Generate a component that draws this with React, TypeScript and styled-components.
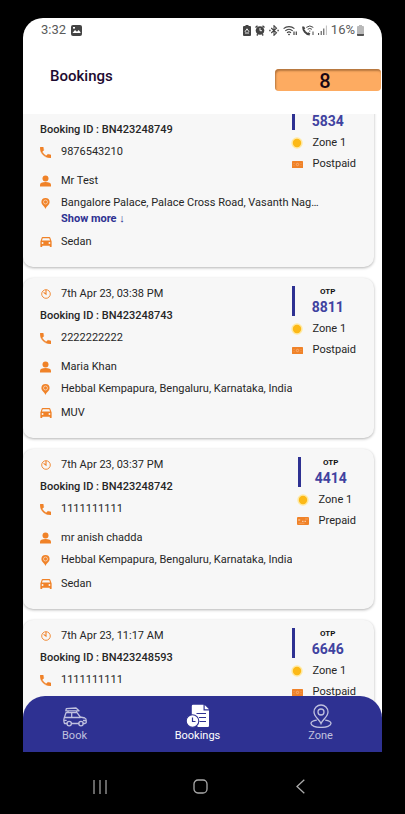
import React, { useLayoutEffect, useRef } from "react";
import styled, { createGlobalStyle } from "styled-components";

const GlobalStyle = createGlobalStyle`
  * { box-sizing: border-box; }
  body { margin: 0; background: #000; }
  button { font: inherit; border: 0; padding: 0; background: none; cursor: pointer; }
`;

const ORANGE = "#f08228";
const INDIGO = "#2e3192";

const Device = styled.div`
  display: flex;
  flex-direction: column;
  height: 100vh;
  padding: 18px 23px 0;
  background: #000;
  font-family: Roboto, "Liberation Sans", sans-serif;
  color: #262626;
`;

const Screen = styled.div`
  flex: 1;
  min-height: 0;
  display: flex;
  flex-direction: column;
  overflow: hidden;
  background: #fff;
  border-radius: 20px 20px 0 0;
`;

const StatusBar = styled.div`
  display: flex;
  align-items: center;
  justify-content: space-between;
  height: 24px;
  padding: 0 18px;
  font-size: 13px;
  line-height: 24px;
  color: #5a5a5a;
`;

const StatusGroup = styled.div<{ $gap: number }>`
  display: flex;
  align-items: center;
  gap: ${(p) => p.$gap}px;
`;

const Header = styled.header`
  display: flex;
  align-items: center;
  justify-content: space-between;
  padding: 23px 1px 19px 27px;
`;

const Title = styled.h1`
  margin: 0;
  padding-bottom: 8px;
  font-size: 15px;
  font-weight: 500;
  line-height: 22px;
  color: #1d0a30;
`;

const CountBadge = styled.div`
  width: 106px;
  height: 22px;
  padding-right: 6px;
  border-radius: 4px;
  background: #fdab61;
  box-shadow: inset 1px 2px 2px #b5763f;
  text-align: center;
  font-size: 20px;
  font-weight: 500;
  line-height: 24px;
  color: #1a0714;
`;

const BookingList = styled.main`
  flex: 1;
  min-height: 0;
  overflow-y: auto;
  scrollbar-width: none;
  display: flex;
  flex-direction: column;
  gap: 11px;
  padding: 0 8px 28px 0;
`;

const Card = styled.article`
  flex: none;
  padding: 8px 18px 17px 17px;
  border-radius: 10px;
  background: #f7f7f7;
  box-shadow: 0 1px 3px rgba(0, 0, 0, 0.3);
  font-size: 11px;
  line-height: 16px;
`;

const CardTop = styled.div`
  display: flex;
  justify-content: space-between;
  padding-bottom: 1px;
`;

const Details = styled.div`
  display: flex;
  flex-direction: column;
  gap: 6px;
`;

const Lower = styled.div`
  display: flex;
  flex-direction: column;
  gap: 8px;
`;

const Row = styled.div`
  display: flex;
  gap: 10px;
  min-width: 0;
`;

const IconSlot = styled.span`
  flex: none;
  display: flex;
  align-items: center;
  justify-content: center;
  width: 11px;
  height: 16px;
  svg { flex: none; }
`;

const BookingId = styled.div`
  font-weight: 500;
`;

const Address = styled.div`
  min-width: 0;
  max-width: 260px;
`;

const AddressText = styled.div`
  overflow: hidden;
  white-space: nowrap;
  text-overflow: ellipsis;
`;

const ShowMore = styled.button`
  display: block;
  font-weight: 700;
  line-height: 15px;
  color: ${INDIGO};
`;

const Side = styled.div`
  display: flex;
  flex-direction: column;
  gap: 5px;
`;

const Otp = styled.div`
  height: 30px;
  padding-left: 5px;
  border-left: 3px solid ${INDIGO};
  text-align: center;
`;

const OtpLabel = styled.div`
  font-size: 8px;
  font-weight: 700;
  line-height: 12px;
  color: #111;
`;

const OtpCode = styled.div`
  font-size: 14px;
  font-weight: 700;
  line-height: 18px;
  color: #3f42a0;
`;

const TabBar = styled.nav`
  position: relative;
  flex: none;
  margin-top: -22px;
  border-radius: 22px 22px 0 0;
  background: ${INDIGO};
`;

const Tabs = styled.div`
  display: grid;
  grid-template-columns: repeat(3, 1fr);
  height: 56px;
  margin-left: -10px;
`;

const Tab = styled.a<{ $active?: boolean }>`
  display: flex;
  flex-direction: column;
  align-items: center;
  padding-top: 8px;
  font-size: 11px;
  line-height: 16px;
  text-decoration: none;
  color: ${(p) => (p.$active ? "#fff" : "#c0c1df")};
  svg { height: 24px; }
`;

const SystemBar = styled.div`
  display: grid;
  grid-template-columns: repeat(3, 1fr);
  height: 62px;
  padding: 7px 31px 0 27px;
`;

const SystemButton = styled.button`
  display: flex;
  align-items: center;
  justify-content: center;
`;

const ClockIcon = () => (
  <svg width="10" height="10" viewBox="0 0 10 10" fill="none" stroke={ORANGE}>
    <circle cx="5" cy="5" r="4.300" strokeWidth=".9" />
    <path d="M5 .8v4.400L2.600 3.400" strokeWidth="1.100" />
  </svg>
);
const PhoneIcon = () => (
  <svg width="11" height="11" viewBox="3 3 18 18" fill={ORANGE} stroke={ORANGE} strokeWidth=".6">
    <path d="M6.600 10.800c1.400 2.800 3.800 5.100 6.600 6.600l2.200-2.200c.3-.3.7-.4 1-.2 1.100.4 2.300.6 3.600.6.6 0 1 .4 1 1V20c0 .6-.4 1-1 1C10.600 21 3 13.400 3 4c0-.6.5-1 1-1h3.500c.6 0 1 .4 1 1 0 1.300.2 2.500.6 3.600.1.300 0 .7-.2 1z" />
  </svg>
);
const PersonIcon = () => (
  <svg width="11" height="12" viewBox="0 0 11 12" fill={ORANGE}>
    <circle cx="5.500" cy="3.400" r="3" />
    <path d="M0 11.500V10c0-2 2.200-2.900 5.500-2.900S11 8 11 10v1.500z" />
  </svg>
);
const PinIcon = () => (
  <svg width="9" height="11" viewBox="0 0 9 11">
    <path d="M4.500 0A4.100 4.100 0 0 0 .4 4C.4 6.800 3.600 8.200 4.500 11 5.400 8.200 8.600 6.800 8.600 4A4.100 4.100 0 0 0 4.500 0z" fill={ORANGE} />
    <circle cx="4.500" cy="4" r="2" fill="none" stroke="#fbe3cf" strokeWidth=".7" />
  </svg>
);
const CarIcon = () => (
  <svg width="12" height="10" viewBox="2.500 5 19 16" fill={ORANGE}>
    <path
      fillRule="evenodd"
      d="M18.900 6c-.2-.6-.8-1-1.400-1h-11c-.7 0-1.200.4-1.400 1L3 12v8c0 .6.4 1 1 1h1c.6 0 1-.4 1-1v-1h12v1c0 .6.4 1 1 1h1c.6 0 1-.4 1-1v-8zM6.500 16a1.500 1.500 0 1 1 0-3 1.500 1.500 0 0 1 0 3zm11 0a1.500 1.500 0 1 1 0-3 1.500 1.500 0 0 1 0 3zM5.500 10.500l1.300-3.500h10.400l1.300 3.500z"
    />
  </svg>
);
const ZoneDot = () => (
  <svg width="12" height="12" viewBox="0 0 12 12">
    <circle cx="6" cy="6" r="5.700" fill="#ffe9a3" />
    <circle cx="6" cy="6" r="4.200" fill="#fcb917" />
  </svg>
);
const CashIcon = () => (
  <svg width="11" height="7" viewBox="0 0 11 7">
    <rect width="11" height="7" rx=".6" fill={ORANGE} />
    <circle cx="5.500" cy="3.500" r="1.200" fill="none" stroke="#fac59b" strokeWidth=".6" />
    <path d="M2 2v.8M9 2v.8M2 4.300v.8M9 4.300v.8" stroke="#f8b784" strokeWidth=".6" />
  </svg>
);
const CreditIcon = () => (
  <svg width="12" height="8" viewBox="0 0 12 8">
    <rect width="12" height="8" rx="1" fill={ORANGE} />
    <path d="M1.200 3h2M5 4.300h1.500M7.500 4.300H9" stroke="#fff" strokeWidth=".7" />
    <path d="M1.500 6.300h6M8 2h3" stroke="#f9bd8c" strokeWidth=".5" />
  </svg>
);

const PhotoIcon = () => (
  <svg width="11" height="11" viewBox="0 0 11 11">
    <rect width="11" height="11" rx="2" fill="#444" />
    <path d="M1.500 8 4 5l2 1.800L7.700 5 9.500 7.200V8z" fill="#fff" />
    <rect x="2" y="2" width="2" height="1.600" fill="#fff" />
  </svg>
);
const BatterySaverIcon = () => (
  <svg width="8" height="11" viewBox="0 0 8 11">
    <path d="M2.500 0h3v1H7a1 1 0 0 1 1 1v8a1 1 0 0 1-1 1H1a1 1 0 0 1-1-1V2a1 1 0 0 1 1-1h1.500z" fill="#444" />
    <path d="M2 6.800 4 3.800l2 3M2 8h4" fill="none" stroke="#fff" strokeWidth=".9" />
  </svg>
);
const AlarmIcon = () => (
  <svg width="10" height="11" viewBox="0 0 10 11">
    <path d="M.5 2.500 2.500.8M9.500 2.500 7.500.8M1.800 10.500l1-1.200M8.200 10.500l-1-1.200" stroke="#444" strokeWidth="1.400" />
    <circle cx="5" cy="5.500" r="4.300" fill="#444" />
    <path d="M5 3v2.700h2" fill="none" stroke="#fff" strokeWidth=".9" />
  </svg>
);
const BluetoothIcon = () => (
  <svg width="10" height="11" viewBox="0 0 10 11" fill="none" stroke="#444" strokeWidth="1.100">
    <path d="m2.200 3 5.300 4.800L5 10.300V.7l2.500 2.500L2.200 8" />
    <path d="M.2 5.500h1.400M8.400 5.500h1.400" strokeWidth="1.500" />
  </svg>
);
const WifiIcon = () => (
  <svg width="15" height="11" viewBox="0 0 15 11" fill="none" stroke="#444">
    <path d="M.6 3.700a8 8 0 0 1 10.800 0M2.300 5.800a5.500 5.500 0 0 1 7.400 0M4 7.800a3 3 0 0 1 4 0" strokeWidth="1.100" />
    <circle cx="6" cy="9.500" r=".5" fill="#444" />
    <path d="M11 10V6.500M13.300 6.500V10" strokeWidth="1.200" />
  </svg>
);
const WifiCallIcon = () => (
  <svg width="12" height="11" viewBox="0 0 12 11" fill="none" stroke="#444">
    <path d="M1.200 1.500C.9 5.500 3.600 9 7.800 9.600M1.200 2l1.300 2M5.800 8l2 1.400" strokeWidth="2" />
    <path d="M4.300 2.400a5.500 5.500 0 0 1 7 0M5.700 4.300a3.300 3.300 0 0 1 4.200 0" />
    <path d="M7.800 5.500v1.200M11 6.500V10" />
  </svg>
);
const SignalIcon = () => (
  <svg width="9" height="10" viewBox="0 0 9 10" stroke="#444">
    <path d="M.6 10V8M3.200 10V6M5.800 10V3.500" />
    <path d="M8.400 10V.5" stroke="#bbb" />
  </svg>
);
const BatteryIcon = () => (
  <svg width="7" height="11" viewBox="0 0 7 11">
    <path d="M2 0h3v1h1a1 1 0 0 1 1 1v8a1 1 0 0 1-1 1H1a1 1 0 0 1-1-1V2a1 1 0 0 1 1-1h1z" fill="#b9b9b9" />
    <path d="M0 9h7v1a1 1 0 0 1-1 1H1a1 1 0 0 1-1-1z" fill="#555" />
  </svg>
);

const BookIcon = () => (
  <svg width="24" height="24" viewBox="0 0 24 24" fill="none" stroke="currentColor" strokeWidth="1.300" strokeLinejoin="round" strokeLinecap="round">
    <path d="M2.800 6.800 3.300 4.600 13 4l3 2.800zM5 7v1.300M13.500 7v1.300" />
    <path d="M4 19.500H1.500C.9 18 .8 15 1.300 13.600L3 8.700h11l3.300 4.300 4.500 1c1 .3 1.400 1.300 1.400 2.500v2.300l-1.200.7h-1.800M8.500 19.500h7.200M1.500 13.500h15.800M8.700 9v4" />
    <circle cx="6.200" cy="19.600" r="2.200" />
    <circle cx="18" cy="19.600" r="2.200" />
    <path d="M1.600 16.300h1.600M20.500 16.500h2" />
  </svg>
);
const BookingsIcon = () => (
  <svg width="24" height="24" viewBox="0 0 24 24">
    <path d="M7 .8h10.500v5.700H23v15.200a1.200 1.200 0 0 1-1.200 1.200H12L5.800 16V2A1.200 1.200 0 0 1 7 .8z" fill="currentColor" />
    <path d="m18.700 1 4.300 4.300h-4.300z" fill="currentColor" />
    <path d="M10.500 9.500H20M13 13.500h7M13.500 17.500H20" stroke={INDIGO} strokeWidth="1.200" />
    <circle cx="6.500" cy="17" r="6.300" fill="currentColor" stroke={INDIGO} strokeWidth="1.100" />
    <path d="M6.500 13.500v4h3" fill="none" stroke={INDIGO} strokeWidth="1.200" />
  </svg>
);
const ZoneIcon = () => (
  <svg width="22" height="24" viewBox="0 0 22 24" fill="none" stroke="currentColor" strokeWidth="1.300">
    <path d="M11 19.500C9.500 15.500 4 12.800 4 8a7 7 0 0 1 14 0c0 4.800-5.500 7.500-7 11.500z" />
    <circle cx="11" cy="8" r="3" />
    <path d="M6.800 16.200C3.300 16.700 1 18 1 19.600c0 2.100 4.500 3.800 10 3.800s10-1.700 10-3.800c0-1.600-2.300-2.900-5.800-3.400" />
  </svg>
);

type Booking = {
  date: string;
  id: string;
  phone: string;
  name: string;
  address: string;
  more?: boolean;
  car: string;
  otp: string;
  payment: "Postpaid" | "Prepaid";
};

const bookings: Booking[] = [
  {
    date: "7th Apr 23, 03:40 PM",
    id: "BN423248749",
    phone: "9876543210",
    name: "Mr Test",
    address: "Bangalore Palace, Palace Cross Road, Vasanth Nagar, Bengaluru",
    more: true,
    car: "Sedan",
    otp: "5834",
    payment: "Postpaid",
  },
  {
    date: "7th Apr 23, 03:38 PM",
    id: "BN423248743",
    phone: "2222222222",
    name: "Maria Khan",
    address: "Hebbal Kempapura, Bengaluru, Karnataka, India",
    car: "MUV",
    otp: "8811",
    payment: "Postpaid",
  },
  {
    date: "7th Apr 23, 03:37 PM",
    id: "BN423248742",
    phone: "1111111111",
    name: "mr anish chadda",
    address: "Hebbal Kempapura, Bengaluru, Karnataka, India",
    car: "Sedan",
    otp: "4414",
    payment: "Prepaid",
  },
  {
    date: "7th Apr 23, 11:17 AM",
    id: "BN423248593",
    phone: "1111111111",
    name: "mr anish chadda",
    address: "Hebbal Kempapura, Bengaluru, Karnataka, India",
    car: "Sedan",
    otp: "6646",
    payment: "Postpaid",
  },
];

const IconRow = ({ icon, children }: { icon: React.ReactNode; children: React.ReactNode }) => (
  <Row>
    <IconSlot>{icon}</IconSlot>
    {children}
  </Row>
);

const BookingCard = ({ booking: b }: { booking: Booking }) => (
  <Card>
    <CardTop>
      <Details>
        <IconRow icon={<ClockIcon />}><span>{b.date}</span></IconRow>
        <BookingId>Booking ID : {b.id}</BookingId>
        <IconRow icon={<PhoneIcon />}><span>{b.phone}</span></IconRow>
      </Details>
      <Side>
        <Otp>
          <OtpLabel>OTP</OtpLabel>
          <OtpCode>{b.otp}</OtpCode>
        </Otp>
        <IconRow icon={<ZoneDot />}><span>Zone 1</span></IconRow>
        <IconRow icon={b.payment === "Prepaid" ? <CreditIcon /> : <CashIcon />}><span>{b.payment}</span></IconRow>
      </Side>
    </CardTop>
    <Lower>
      <Details>
        <IconRow icon={<PersonIcon />}><span>{b.name}</span></IconRow>
        <IconRow icon={<PinIcon />}>
          <Address>
            <AddressText>{b.address}</AddressText>
            {b.more && <ShowMore type="button">Show more ↓</ShowMore>}
          </Address>
        </IconRow>
      </Details>
      <IconRow icon={<CarIcon />}><span>{b.car}</span></IconRow>
    </Lower>
  </Card>
);

export default function App() {
  const listRef = useRef<HTMLElement>(null);

  useLayoutEffect(() => {
    if (listRef.current) listRef.current.scrollTop = 22;
  }, []);

  return (
    <Device>
      <GlobalStyle />
      <Screen>
        <StatusBar>
          <StatusGroup $gap={5}>
            <span>3:32</span>
            <PhotoIcon />
          </StatusGroup>
          <StatusGroup $gap={4}>
            <BatterySaverIcon />
            <AlarmIcon />
            <BluetoothIcon />
            <WifiIcon />
            <WifiCallIcon />
            <SignalIcon />
            <StatusGroup $gap={2}>
              <span>16%</span>
              <BatteryIcon />
            </StatusGroup>
          </StatusGroup>
        </StatusBar>
        <Header>
          <Title>Bookings</Title>
          <CountBadge>8</CountBadge>
        </Header>
        <BookingList ref={listRef}>
          {bookings.map((b) => (
            <BookingCard key={b.id} booking={b} />
          ))}
        </BookingList>
        <TabBar>
          <Tabs>
            <Tab href="#book"><BookIcon />Book</Tab>
            <Tab href="#bookings" $active aria-current="page"><BookingsIcon />Bookings</Tab>
            <Tab href="#zone"><ZoneIcon />Zone</Tab>
          </Tabs>
        </TabBar>
      </Screen>
      <SystemBar>
        <SystemButton type="button" aria-label="Recent apps">
          <svg width="14" height="14" viewBox="0 0 14 14" stroke="#aaa" strokeWidth="1.200">
            <path d="M1 0v14M7 0v14M13 0v14" />
          </svg>
        </SystemButton>
        <SystemButton type="button" aria-label="Home">
          <svg width="15" height="15" viewBox="0 0 15 15" fill="none" stroke="#aaa" strokeWidth="1.300">
            <rect x="1" y="1" width="13" height="13" rx="4" />
          </svg>
        </SystemButton>
        <SystemButton type="button" aria-label="Back">
          <svg width="9" height="15" viewBox="0 0 9 15" fill="none" stroke="#aaa" strokeWidth="1.300">
            <path d="M8.300.7 1 7.500l7.300 6.800" />
          </svg>
        </SystemButton>
      </SystemBar>
    </Device>
  );
}
